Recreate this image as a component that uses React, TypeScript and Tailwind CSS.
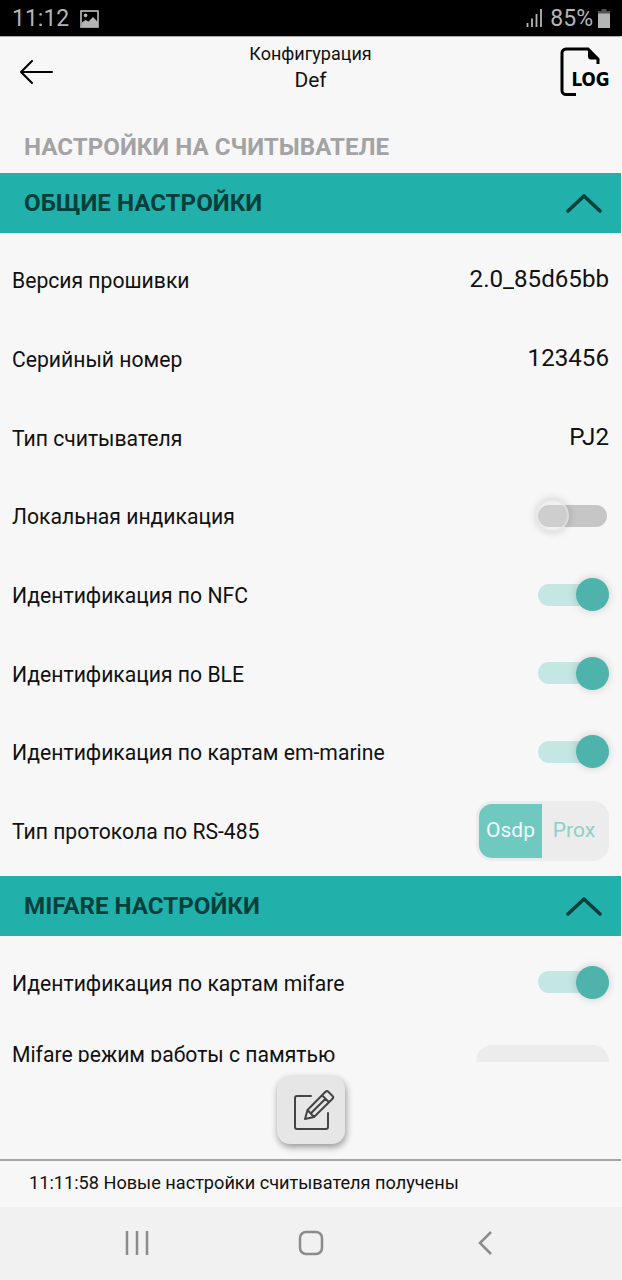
import type { ReactNode } from "react";

interface RowProps {
  label: string;
  children: ReactNode;
}

function Row({ label, children }: RowProps) {
  return (
    <div className="flex h-[78.7px] shrink-0 items-center justify-between pl-3 pr-[13px]">
      <span className="whitespace-nowrap text-[21.15px] leading-6">{label}</span>
      {children}
    </div>
  );
}

function Value({ children }: { children: ReactNode }) {
  return <span className="-mt-1 text-[24.15px] leading-7">{children}</span>;
}

function Toggle({ on = false }: { on?: boolean }) {
  return on ? (
    <div className="-mt-[3px] flex h-[22px] w-[71px] items-center justify-end rounded-full bg-[#c4e7e4]">
      <div className="size-[33px] rounded-full bg-[#4db3ab] shadow-[0_0_8px_rgba(0,0,0,0.18)]" />
    </div>
  ) : (
    <div className="-mt-[3px] mr-0.5 flex h-[22px] w-[69px] items-center rounded-full bg-[#c6c6c6]">
      <div className="-ml-[2px] size-[33px] shrink-0 rounded-full border-2 border-[#e2e2e2]/70 bg-[#e2e2e2]/30 shadow-[0_0_8px_rgba(0,0,0,0.18)]" />
    </div>
  );
}

function SectionHeader({ title }: { title: string }) {
  return (
    <div className="mr-px flex h-[60px] shrink-0 items-center justify-between bg-[#21b1aa] pl-6 pr-[19px] text-[#053f3c]">
      <h2 className="text-[24.15px] font-bold leading-7">{title}</h2>
      <svg width="36" height="20" viewBox="0 0 36 20" fill="none" stroke="currentColor" strokeWidth="3.6" strokeLinecap="round" strokeLinejoin="round">
        <path d="M2 18 18 3l16 15" />
      </svg>
    </div>
  );
}

function StatusBar() {
  return (
    <div className="flex h-9 shrink-0 items-center bg-black pl-3 pr-3 text-[#b5b5b5]">
      <span className="mt-0.5 text-[23px] leading-7">11:12</span>
      <svg className="ml-[11px] mt-0.5" width="19" height="18" viewBox="0 0 19 18">
        <rect x="1" y="1" width="17" height="16" fill="none" stroke="currentColor" strokeWidth="1.7" />
        <circle cx="5.6" cy="5.4" r="1.8" fill="currentColor" />
        <path d="M2 12.5 5.500 10l3 1.500L13 7l5 5v5H2z" fill="currentColor" />
      </svg>
      <svg className="ml-auto" width="17" height="18" viewBox="0 0 17 18" stroke="currentColor" strokeWidth="1.8">
        <path d="M1.5 14v4M6 9.500v8.500M10.500 5v13M15 0v18" />
      </svg>
      <span className="ml-[7px] mt-0.5 text-[23px] leading-7">85%</span>
      <svg className="ml-[5px]" width="12" height="19" viewBox="0 0 12 19" fill="currentColor">
        <path d="M3.500 0h5v2h3.500v3H0V2h3.500z" opacity=".45" />
        <rect y="4.500" width="12" height="14.500" />
      </svg>
    </div>
  );
}

function LogIcon() {
  return (
    <svg width="51" height="50" viewBox="0 0 51 50" fill="none">
      <path d="M16 47.500H6a4 4 0 0 1-4-4V6a4 4 0 0 1 4-4h22l10 10v5" stroke="black" strokeWidth="3" />
      <path d="M28 1.500 39 12.500H31a3 3 0 0 1-3-3z" fill="black" />
      <text
        x="11.500"
        y="39"
        textLength="38"
        lengthAdjust="spacingAndGlyphs"
        fontFamily="DejaVu Sans, sans-serif"
        fontSize="20"
        fontWeight="700"
        fill="black"
      >
        LOG
      </text>
    </svg>
  );
}

export default function App() {
  return (
    <div className="flex h-[1280px] w-[622px] flex-col overflow-hidden bg-[#f7f7f7] font-['Roboto',sans-serif] text-[#111]">
      <StatusBar />

      <header className="mr-px grid h-[92px] shrink-0 grid-cols-3 border-t border-[#aaa] px-[19px]">
        <svg className="mt-[23px]" width="35" height="26" viewBox="0 0 35 26" fill="none" stroke="black" strokeWidth="2" strokeLinecap="round" strokeLinejoin="round">
          <path d="M33 12H2M13 1 2 12l11 11" />
        </svg>
        <div className="mt-[5px] text-center">
          <p className="text-[18px] leading-6">Конфигурация</p>
          <p className="text-[21px] leading-7">Def</p>
        </div>
        <div className="-mr-[9px] mt-[10px] flex justify-end">
          <LogIcon />
        </div>
      </header>

      <h1 className="h-[45px] shrink-0 pl-6 pt-[5px] text-[24.15px] font-bold leading-7 text-[#a3a3a6]">
        НАСТРОЙКИ НА СЧИТЫВАТЕЛЕ
      </h1>

      <main className="flex h-[889px] shrink-0 flex-col overflow-hidden">
        <SectionHeader title="ОБЩИЕ НАСТРОЙКИ" />
        <div className="flex h-[643px] shrink-0 flex-col pt-[9px]">
          <Row label="Версия прошивки">
            <Value>2.0_85d65bb</Value>
          </Row>
          <Row label="Серийный номер">
            <Value>123456</Value>
          </Row>
          <Row label="Тип считывателя">
            <Value>PJ2</Value>
          </Row>
          <Row label="Локальная индикация">
            <Toggle />
          </Row>
          <Row label="Идентификация по NFC">
            <Toggle on />
          </Row>
          <Row label="Идентификация по BLE">
            <Toggle on />
          </Row>
          <Row label="Идентификация по картам em-marine">
            <Toggle on />
          </Row>
          <Row label="Тип протокола по RS-485">
            <div className="-mt-[3px] flex h-[60px] w-[133px] rounded-2xl bg-[#ececec] py-[3px] pl-[3px] text-[21px]">
              <div className="flex w-[63px] items-center justify-center rounded-l-[13px] bg-[#70c9c1] text-[#f0fbfa]">Osdp</div>
              <div className="flex flex-1 items-center justify-center pr-[3px] text-[#8fcfc9]">Prox</div>
            </div>
          </Row>
        </div>

        <SectionHeader title="MIFARE НАСТРОЙКИ" />
        <div className="flex flex-col pt-[8.5px]">
          <Row label="Идентификация по картам mifare">
            <Toggle on />
          </Row>
          <div className="flex h-[60px] shrink-0 items-start justify-between pl-3 pr-[13px] pt-[22px]">
            <span className="-mt-[2px] text-[21.15px] leading-6">Mifare режим работы с памятью</span>
            <div className="h-[60px] w-[133px] shrink-0 rounded-2xl bg-[#ececec]" />
          </div>
        </div>
      </main>

      <div className="flex h-[97px] shrink-0 items-start justify-center pt-3.5">
        <button className="flex size-[68px] items-center justify-center rounded-[13px] bg-[#e6e6e6] shadow-[1px_3px_7px_rgba(0,0,0,0.4)]">
          <svg className="-mt-px ml-[5px]" width="42" height="42" viewBox="0 0 42 42" fill="none" stroke="#444" strokeWidth="2" strokeLinecap="round" strokeLinejoin="round">
            <path d="M18 7H4a2 2 0 0 0-2 2v29a2 2 0 0 0 2 2h29a2 2 0 0 0 2-2V24" />
            <path d="M12 30l2.500-9L32.500 2.800a2 2 0 0 1 2.800 0l4.200 4.200a2 2 0 0 1 0 2.800L21 28zM14.500 21l6.500 7M29 6.300l7 7M17.700 24.500l14.500-14.500" />
          </svg>
        </button>
      </div>

      <footer className="mr-px flex h-12 shrink-0 items-center border-t-2 border-[#a5a5a5] pb-[3px] pl-[29px] text-[18.15px]">
        11:11:58 Новые настройки считывателя получены
      </footer>

      <nav className="grid flex-1 grid-cols-[273px_75px_274px] items-center bg-[#f1f1f1] pb-0.5 text-[#8b8b8b]">
        <svg className="justify-self-center" width="24" height="24" viewBox="0 0 24 24" stroke="currentColor" strokeWidth="2.500">
          <path d="M2 0v24M12 0v24M22 0v24" />
        </svg>
        <svg className="justify-self-center" width="26" height="26" viewBox="0 0 26 26" fill="none" stroke="currentColor" strokeWidth="2.500">
          <rect x="2" y="2" width="22" height="22" rx="6" />
        </svg>
        <svg className="justify-self-center" width="16" height="26" viewBox="0 0 16 26" fill="none" stroke="currentColor" strokeWidth="2.500">
          <path d="M14 2 3 13l11 11" />
        </svg>
      </nav>
    </div>
  );
}
